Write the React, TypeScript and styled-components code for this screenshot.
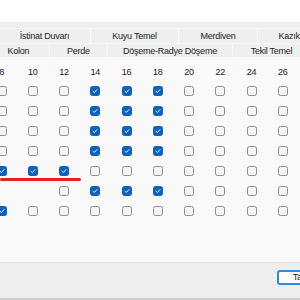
import styled, { createGlobalStyle } from "styled-components";

const GlobalStyle = createGlobalStyle`
  html, body {
    margin: 0;
    padding: 0;
  }
  body {
    width: 300px;
    height: 300px;
    overflow: hidden;
    background: #ffffff;
    font-family: "Liberation Sans", Arial, sans-serif;
  }
`;

const Window = styled.div`
  width: 417px;
  height: 300px;
  display: flex;
  flex-direction: column;
  background: #ffffff;
`;

const TopArea = styled.div`
  flex: none;
  height: 22px;
  background: #ffffff;
`;

const TabStrip = styled.div`
  flex: none;
  padding-top: 6px;
  background: #eeeeee;
`;

const TabRow = styled.div<{ $offset: number; $h: number }>`
  display: flex;
  height: ${(p) => p.$h}px;
  margin-left: ${(p) => p.$offset}px;
`;

const Tab = styled.div<{ $w: number }>`
  flex: none;
  width: ${(p) => p.$w}px;
  box-sizing: border-box;
  display: flex;
  align-items: center;
  justify-content: center;
  border-left: 1px solid #f8f8f8;
  border-top: 1px solid #f8f8f8;
  background: #efefef;
  color: #1e1e1e;
  font-size: 9px;
  letter-spacing: -0.25px;
  white-space: nowrap;
`;

const Body = styled.div`
  flex: 1;
  position: relative;
  background: #f9f9f9;
  padding-top: 6px;
  overflow: hidden;
`;

const Grid = styled.div`
  display: grid;
  grid-template-columns: repeat(10, 31.25px);
  grid-template-rows: 18px;
  grid-auto-rows: 20px;
  margin-left: -14px;
`;

const Cell = styled.div`
  display: flex;
  align-items: center;
  justify-content: center;
`;

const Num = styled(Cell)`
  color: #1a1a1a;
  font-size: 9px;
  letter-spacing: -0.25px;
`;

const Box = styled.div<{ $on: boolean }>`
  width: 10px;
  height: 10px;
  box-sizing: border-box;
  border-radius: 2.5px;
  border: 1px solid ${(p) => (p.$on ? "#0a62c0" : "#8c8c8c")};
  background: ${(p) => (p.$on ? "#0a62c0" : "#f5f5f5")};
  display: flex;
  align-items: center;
  justify-content: center;
`;

const RedMark = styled.div`
  position: absolute;
  left: 0;
  top: 121px;
  width: 81px;
  height: 3px;
  border-radius: 2px;
  background: #e8202a;
`;

const Footer = styled.div`
  flex: none;
  height: 28px;
  display: flex;
  justify-content: flex-end;
  align-items: flex-start;
  gap: 8px;
  padding: 7px 12px 0 0;
  box-sizing: content-box;
  background: #eeeeee;
  border-top: 1px solid #e2e2e2;
  border-bottom: 2px solid #cccccc;
`;

const Button = styled.button<{ $primary?: boolean }>`
  width: 60px;
  height: 15px;
  padding: 0;
  box-sizing: border-box;
  border-radius: 3px;
  border: ${(p) => (p.$primary ? "2px solid #2f89dc" : "1px solid #d0d0d0")};
  background: #fdfdfd;
  color: #1a1a1a;
  font-family: "Liberation Sans", Arial, sans-serif;
  font-size: 9px;
  letter-spacing: -0.25px;
  line-height: 1;
`;

const cols = ["8", "10", "12", "14", "16", "18", "20", "22", "24", "26"];

// C = checked, U = unchecked, - = no box
const rows = [
  "UUUCCCUUUU",
  "UUUCCCUUUU",
  "UUUCCCUUUU",
  "UUUCCCUUUU",
  "CCCUUUUUUU",
  "--UCCCUUUU",
  "CUUUUUUUUU",
];

function Check() {
  return (
    <svg width="6" height="6" viewBox="0 0 6 6">
      <path d="M1 3.2 L2.4 4.5 L5 1.6" fill="none" stroke="#ffffff" strokeWidth="0.9" strokeLinecap="round" strokeLinejoin="round" />
    </svg>
  );
}

export default function App() {
  return (
    <>
      <GlobalStyle />
      <Window>
        <TopArea />
        <TabStrip>
          <TabRow $offset={-2} $h={15}>
            <Tab $w={92}>İstinat Duvarı</Tab>
            <Tab $w={88}>Kuyu Temel</Tab>
            <Tab $w={79}>Merdiven</Tab>
            <Tab $w={88}>Kazık Temel</Tab>
          </TabRow>
          <TabRow $offset={-13} $h={14}>
            <Tab $w={62}>Kolon</Tab>
            <Tab $w={58}>Perde</Tab>
            <Tab $w={125}>Döşeme-Radye Döşeme</Tab>
            <Tab $w={78}>Tekil Temel</Tab>
          </TabRow>
        </TabStrip>
        <Body>
          <Grid>
            {cols.map((c) => (
              <Num key={c}>{c}</Num>
            ))}
            {rows.map((r, ri) =>
              r.split("").map((s, ci) => (
                <Cell key={`${ri}-${ci}`}>
                  {s !== "-" && <Box $on={s === "C"}>{s === "C" && <Check />}</Box>}
                </Cell>
              ))
            )}
          </Grid>
          <RedMark />
        </Body>
        <Footer>
          <Button $primary>Tamam</Button>
          <Button>İptal</Button>
        </Footer>
      </Window>
    </>
  );
}
